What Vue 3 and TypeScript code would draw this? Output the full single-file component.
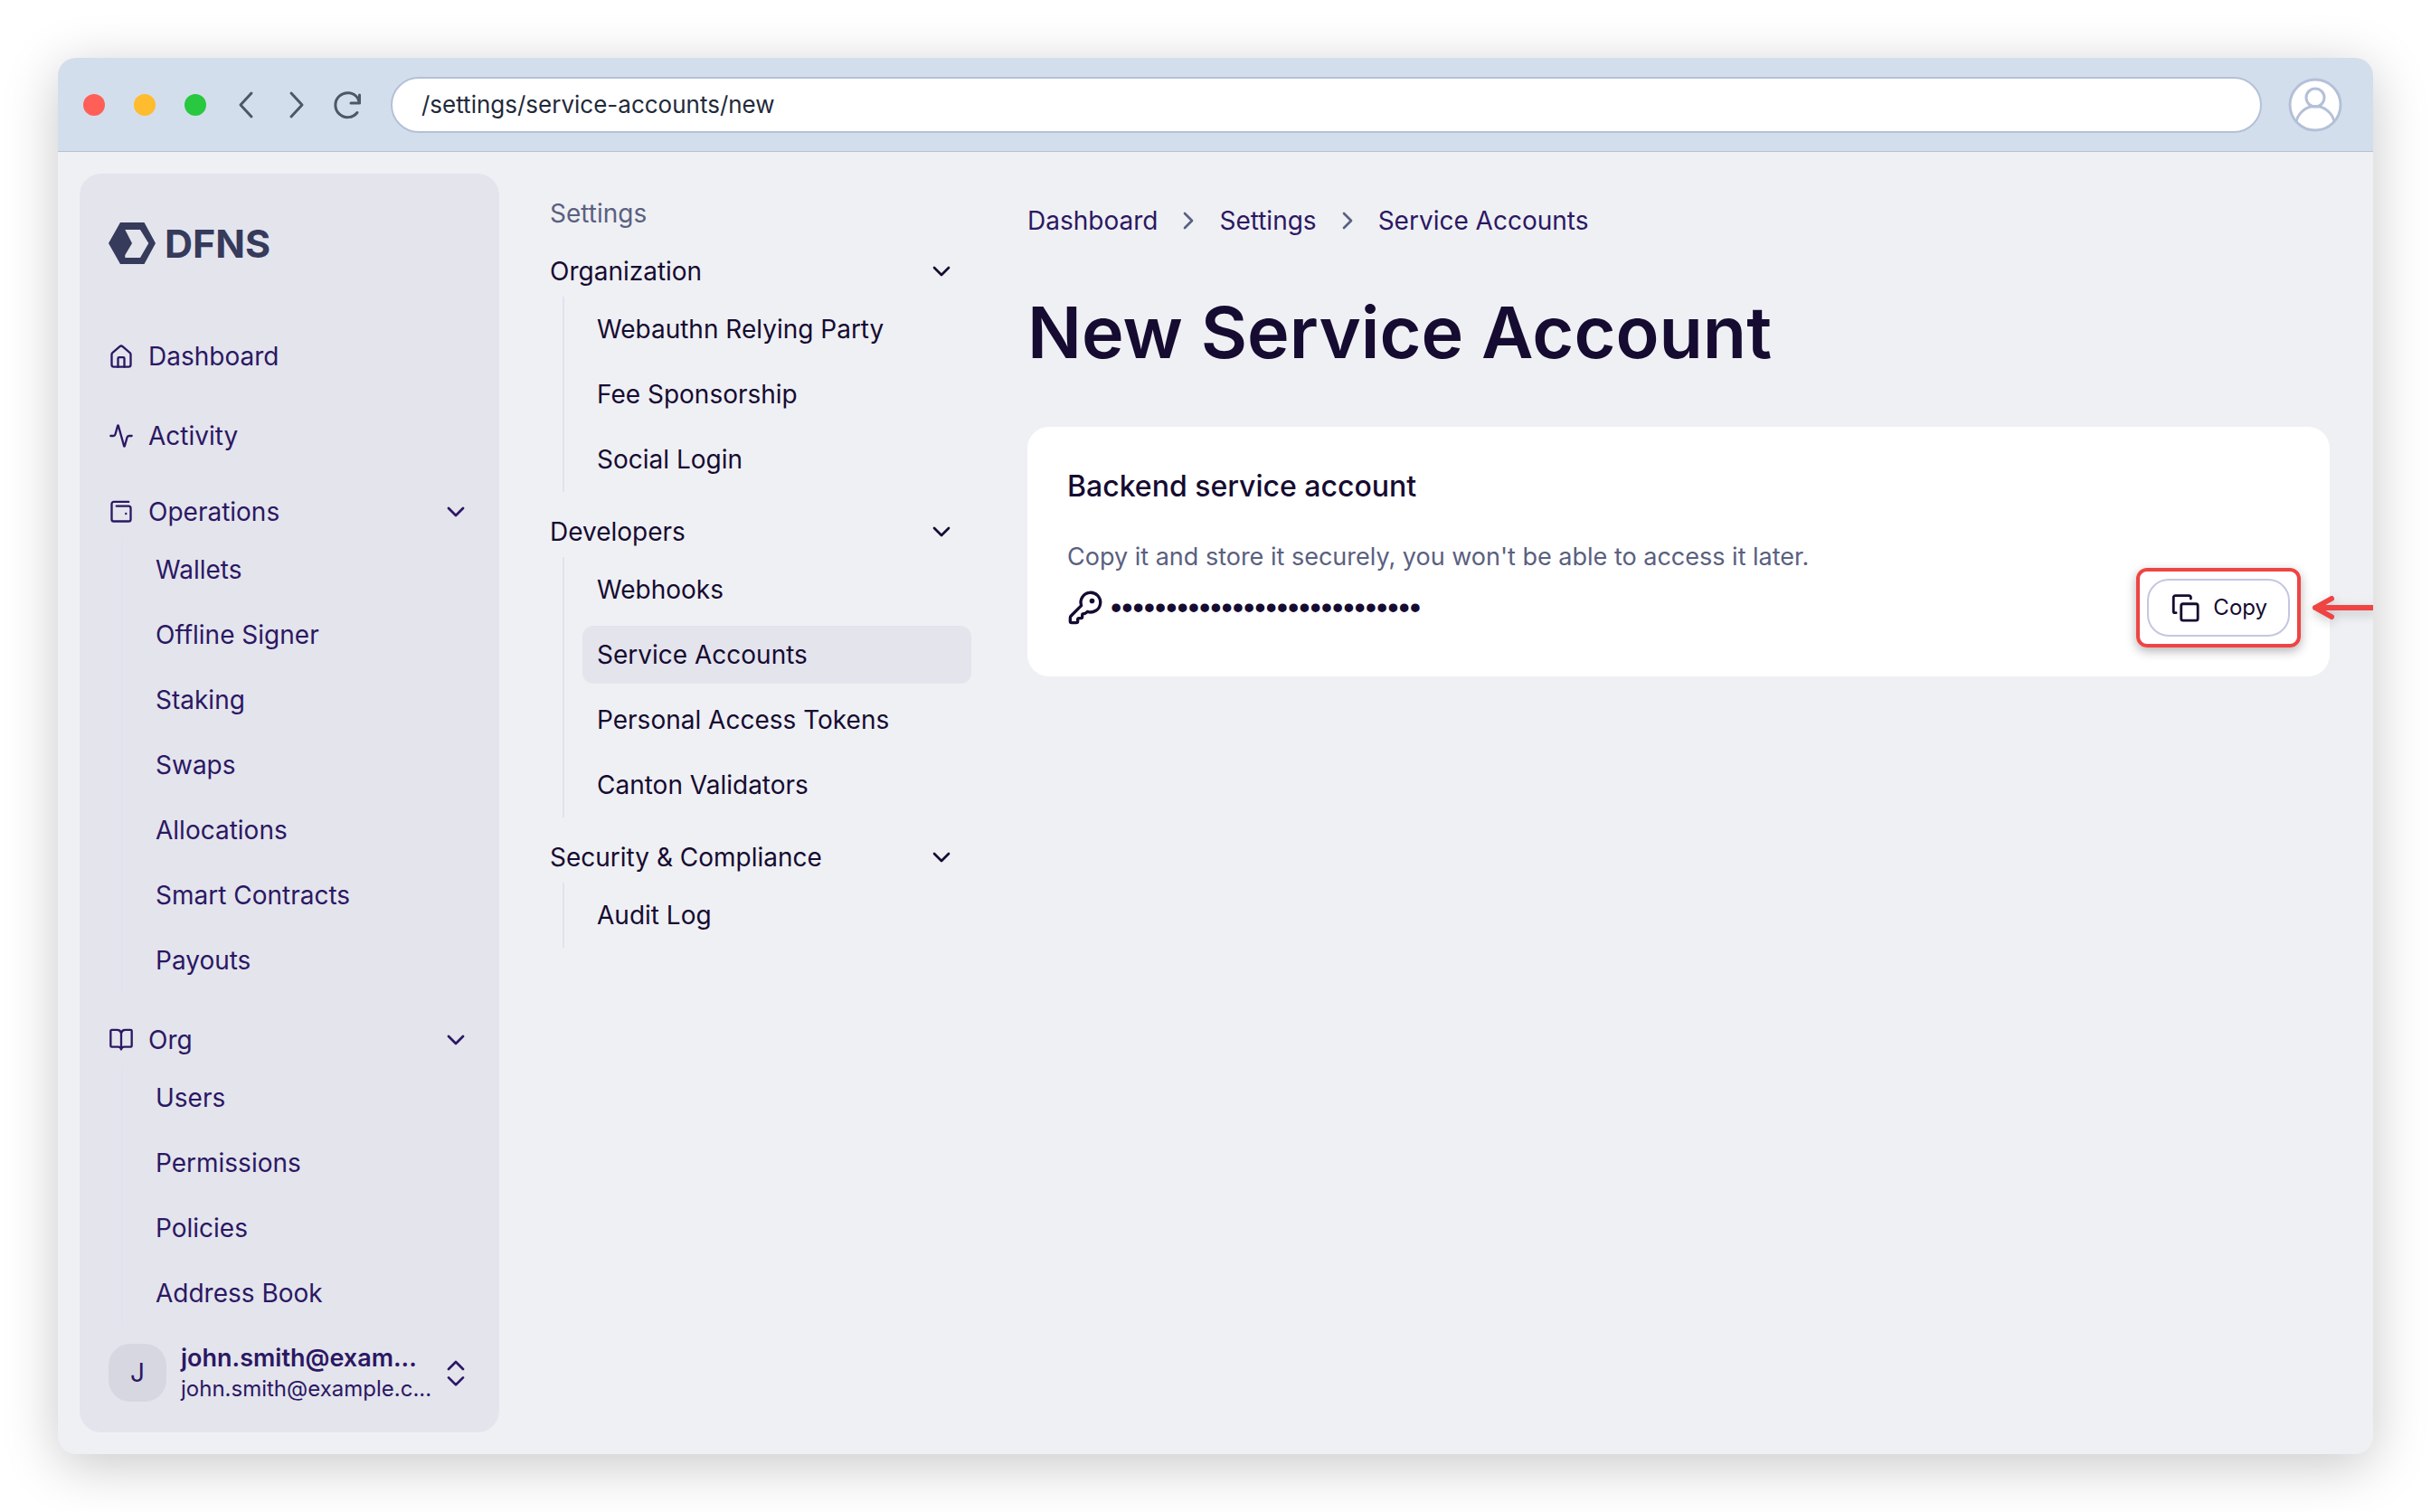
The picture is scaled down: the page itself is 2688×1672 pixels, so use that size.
<script setup lang="ts">
import { ref } from 'vue'

interface NavGroup {
  label: string
  icon?: string
  items: string[]
}

const url = ref('/settings/service-accounts/new')
const secret = '•'.repeat(28)
const activeItem = 'Service Accounts'

const primaryLinks = [
  { label: 'Dashboard', icon: 'home' },
  { label: 'Activity', icon: 'activity' },
]

const primaryGroups: NavGroup[] = [
  {
    label: 'Operations',
    icon: 'wallet',
    items: ['Wallets', 'Offline Signer', 'Staking', 'Swaps', 'Allocations', 'Smart Contracts', 'Payouts'],
  },
  { label: 'Org', icon: 'book', items: ['Users', 'Permissions', 'Policies', 'Address Book'] },
]

const settingsGroups: NavGroup[] = [
  { label: 'Organization', items: ['Webauthn Relying Party', 'Fee Sponsorship', 'Social Login'] },
  { label: 'Developers', items: ['Webhooks', 'Service Accounts', 'Personal Access Tokens', 'Canton Validators'] },
  { label: 'Security & Compliance', items: ['Audit Log'] },
]

const crumbs = ['Dashboard', 'Settings', 'Service Accounts']

const icons: Record<string, string[]> = {
  home: [
    'M3 10.2a2 2 0 0 1 .7-1.5l7-6a2 2 0 0 1 2.6 0l7 6a2 2 0 0 1 .7 1.500v9.800a2 2 0 0 1-2 2H5a2 2 0 0 1-2-2z',
    'M9 22v-8a1 1 0 0 1 1-1h4a1 1 0 0 1 1 1v8',
  ],
  activity: [
    'M22 12h-2.480a2 2 0 0 0-1.930 1.460l-2.350 8.360a.25.25 0 0 1-.48 0L9.240 2.180a.25.25 0 0 0-.48 0l-2.350 8.360A2 2 0 0 1 4.490 12H2',
  ],
  wallet: [
    'M19 2.500H5a2 2 0 0 0-2 2V19a2 2 0 0 0 2 2h14a2 2 0 0 0 2-2V8.500a2 2 0 0 0-2-2H7.500',
    'M16.500 13.700h.01',
  ],
  book: [
    'M12 6v15',
    'M3 18.500a1 1 0 0 1-1-1v-14a1 1 0 0 1 1-1h5a4 4 0 0 1 4 3 4 4 0 0 1 4-3h5a1 1 0 0 1 1 1v14a1 1 0 0 1-1 1h-6a3 3 0 0 0-3 2 3 3 0 0 0-3-2z',
  ],
}
</script>

<template>
  <div class="browser">
    <header class="chrome">
      <div class="lights" aria-hidden="true">
        <span class="light red"></span>
        <span class="light amber"></span>
        <span class="light green"></span>
      </div>
      <button class="chrome-btn" type="button" aria-label="Back">
        <svg width="20" height="32" viewBox="0 0 20 32"><path d="M16 3 4 16l12 13" /></svg>
      </button>
      <button class="chrome-btn" type="button" aria-label="Forward">
        <svg width="20" height="32" viewBox="0 0 20 32"><path d="m4 3 12 13L4 29" /></svg>
      </button>
      <button class="chrome-btn reload" type="button" aria-label="Reload">
        <svg width="36" height="36" viewBox="0 0 36 36">
          <path d="M29 26.500A13.500 13.500 0 1 1 29.500 10.500L31.500 15.500" />
          <path d="M31.500 7v9H22" />
        </svg>
      </button>
      <input v-model="url" class="address" type="text" aria-label="Address" />
      <svg class="profile" width="60" height="60" viewBox="0 0 60 60" aria-hidden="true">
        <circle cx="30" cy="30" r="28" fill="#fff" />
        <circle cx="30" cy="22" r="10" />
        <path d="M9 48.500a21.500 21.500 0 0 1 42 0" />
      </svg>
    </header>

    <div class="body">
      <aside class="sidebar">
        <a class="logo" href="#">
          <svg width="52" height="46" viewBox="0 0 52 46" aria-hidden="true">
            <path
              fill="currentColor"
              fill-rule="evenodd"
              d="M13 0h26.500L52 23 39.500 46H13L0 23zM18.300 8 26 23l-7.700 13v3H35l9.300-16L35 8z"
            />
          </svg>
          <span>DFNS</span>
        </a>

        <nav class="primary" aria-label="Main">
          <a v-for="link in primaryLinks" :key="link.label" class="top-link" href="#">
            <svg class="line-icon" viewBox="0 0 24 24" aria-hidden="true">
              <path v-for="d in icons[link.icon]" :key="d" :d="d" />
            </svg>
            {{ link.label }}
          </a>
          <section v-for="group in primaryGroups" :key="group.label" class="group">
            <button class="group-head" type="button" aria-expanded="true">
              <svg class="line-icon" viewBox="0 0 24 24" aria-hidden="true">
                <path v-for="d in icons[group.icon ?? '']" :key="d" :d="d" />
              </svg>
              <span class="grow">{{ group.label }}</span>
              <svg class="chevron" viewBox="0 0 24 24" aria-hidden="true"><path d="m6 9 6 6 6-6" /></svg>
            </button>
            <ul class="sub">
              <li v-for="item in group.items" :key="item"><a href="#">{{ item }}</a></li>
            </ul>
          </section>
        </nav>

        <button class="account" type="button">
          <span class="initial">J</span>
          <span class="who">
            <strong>john.smith@exam...</strong>
            <small>john.smith@example.c...</small>
          </span>
          <svg class="chevron" viewBox="0 0 24 24" aria-hidden="true">
            <path d="m6 9 6-6 6 6M6 16l6 6 6-6" />
          </svg>
        </button>
      </aside>

      <nav class="settings" aria-label="Settings">
        <p class="settings-title">Settings</p>
        <section v-for="group in settingsGroups" :key="group.label" class="group">
          <button class="group-head" type="button" aria-expanded="true">
            <span class="grow">{{ group.label }}</span>
            <svg class="chevron" viewBox="0 0 24 24" aria-hidden="true"><path d="m6 9 6 6 6-6" /></svg>
          </button>
          <ul class="sub">
            <li v-for="item in group.items" :key="item">
              <a href="#" :class="{ active: item === activeItem }">{{ item }}</a>
            </li>
          </ul>
        </section>
      </nav>

      <main class="content">
        <nav class="crumbs" aria-label="Breadcrumb">
          <template v-for="(crumb, i) in crumbs" :key="crumb">
            <svg v-if="i > 0" class="crumb-sep" viewBox="0 0 24 24" aria-hidden="true">
              <path d="m9 6 6 6-6 6" />
            </svg>
            <a href="#">{{ crumb }}</a>
          </template>
        </nav>
        <h1>New Service Account</h1>
        <section class="card">
          <h2>Backend service account</h2>
          <p class="hint">Copy it and store it securely, you won't be able to access it later.</p>
          <div class="secret-row">
            <svg class="key" width="40" height="40" viewBox="0 0 24 24" aria-hidden="true">
              <path
                d="M2.590 17.410A2 2 0 0 0 2 18.830V21a1 1 0 0 0 1 1h3a1 1 0 0 0 1-1v-1a1 1 0 0 1 1-1h1a1 1 0 0 0 1-1v-1a1 1 0 0 1 1-1h.17a2 2 0 0 0 1.410-.59l.81-.81a6.500 6.500 0 1 0-4-4z"
              />
              <circle cx="16.500" cy="7.500" r=".7" fill="currentColor" />
            </svg>
            <span class="dots">{{ secret }}</span>
            <div class="copy-wrap">
              <button class="copy" type="button">
                <svg width="34" height="34" viewBox="0 0 24 24" aria-hidden="true">
                  <rect x="9" y="9" width="13" height="13" rx="1.500" />
                  <path d="M5 16H4a1 1 0 0 1-1-1V4a1.500 1.500 0 0 1 1.500-1.500H15A1.500 1.500 0 0 1 16.500 4v1" />
                </svg>
                Copy
              </button>
              <svg class="arrow" width="72" height="36" viewBox="0 0 72 36" aria-hidden="true">
                <path d="M5 18h70M23 8 5 18l18 10" />
              </svg>
            </div>
          </div>
        </section>
      </main>
    </div>
  </div>
</template>

<style>
body {
  background: #fff;
}
</style>

<style scoped>
* {
  box-sizing: border-box;
}

.browser {
  display: flex;
  flex-direction: column;
  min-height: calc(100vh - 128px);
  margin: 64px;
  overflow: hidden;
  border-radius: 20px;
  background: #eff0f4;
  box-shadow: 0 12px 60px rgba(0, 0, 0, 0.22);
  color: #160b31;
  font: 400 28px/36px Inter, "Liberation Sans", sans-serif;
}

a {
  color: inherit;
  text-decoration: none;
}

button {
  padding: 0;
  border: 0;
  background: none;
  color: inherit;
  font: inherit;
  text-align: left;
  cursor: pointer;
}

h1,
h2,
p,
ul {
  margin: 0;
  padding: 0;
  list-style: none;
}

svg {
  flex: none;
  fill: none;
  stroke-linecap: round;
  stroke-linejoin: round;
}

/* Browser chrome */
.chrome {
  display: flex;
  align-items: center;
  height: 104px;
  padding: 0 34px 0 28px;
  border-bottom: 1px solid #b4c2d8;
  background: #d3deec;
}

.lights {
  display: flex;
  gap: 32px;
  margin-right: 34px;
}

.light {
  width: 24px;
  height: 24px;
  border-radius: 50%;
}

.red {
  background: #ff5f57;
}

.amber {
  background: #febc2e;
}

.green {
  background: #28c840;
}

.chrome-btn {
  display: flex;
  margin-right: 36px;
  stroke: #4b5866;
  stroke-width: 3;
}

.reload {
  margin-right: 30px;
  margin-left: -8px;
}

.address {
  flex: 1;
  min-width: 0;
  height: 62px;
  padding: 0 32px;
  border: 2px solid #b4c0d8;
  border-radius: 31px;
  background: #fff;
  color: #1f2a3a;
  font: 400 26px/36px Inter, "Liberation Sans", sans-serif;
}

.profile {
  margin-left: 29px;
  stroke: #b4c0d8;
  stroke-width: 3;
}

/* Page body */
.body {
  display: flex;
  flex: 1;
  padding: 24px;
}

.sidebar {
  display: flex;
  flex: none;
  flex-direction: column;
  width: 464px;
  padding: 54px 32px 32px;
  border-radius: 24px;
  background: #e4e4ed;
  color: #2b1863;
}

.logo {
  display: flex;
  align-items: center;
  gap: 10px;
  height: 46px;
  margin-bottom: 70px;
  color: #363a5b;
  font-size: 43px;
  font-weight: 700;
}

.primary {
  display: flex;
  flex-direction: column;
  gap: 24px;
}

.top-link {
  display: flex;
  align-items: center;
  gap: 16px;
  height: 64px;
}

.line-icon {
  width: 28px;
  height: 28px;
  stroke: currentColor;
  stroke-width: 2;
}

.group-head {
  display: flex;
  align-items: center;
  gap: 16px;
  width: 100%;
  height: 56px;
}

.grow {
  flex: 1;
}

.chevron {
  width: 32px;
  height: 32px;
  stroke: currentColor;
  stroke-width: 2;
}

.sub {
  margin-left: 14px;
  border-left: 2px solid #dfe3f0;
}

.sub li {
  padding: 4px 0 4px 20px;
}

.sub a {
  display: block;
  padding: 14px 16px;
  border-radius: 12px;
}

.sub .active {
  background: #e4e4ed;
}

.account {
  display: flex;
  align-items: center;
  gap: 16px;
  margin-top: auto;
}

.initial {
  display: grid;
  flex: none;
  place-items: center;
  width: 64px;
  height: 64px;
  border-radius: 24px;
  background: #d7d7e1;
}

.who {
  display: flex;
  flex: 1;
  flex-direction: column;
  min-width: 0;
  white-space: nowrap;
}

.who strong {
  font-size: 27px;
  font-weight: 600;
}

.who small {
  font-size: 24px;
  line-height: 32px;
}

/* Settings navigation */
.settings {
  display: flex;
  flex: none;
  flex-direction: column;
  gap: 16px;
  width: 466px;
  margin-left: 56px;
  padding-top: 26px;
}

.settings-title {
  margin-bottom: 2px;
  color: #5a6080;
}

.settings .group-head {
  padding-right: 17px;
}

/* Content */
.content {
  flex: 1;
  min-width: 0;
  margin-left: 62px;
  padding: 34px 24px 0 0;
}

.crumbs {
  display: flex;
  align-items: center;
  gap: 18px;
  color: #2b1863;
}

.crumb-sep {
  width: 32px;
  height: 32px;
  stroke: #5a6080;
  stroke-width: 2;
}

h1 {
  margin: 56px 0;
  font-size: 79px;
  font-weight: 600;
  line-height: 98px;
}

.card {
  padding: 44px;
  border-radius: 24px;
  background: #fff;
}

h2 {
  font-size: 32px;
  font-weight: 500;
  line-height: 44px;
}

.hint {
  margin-top: 38px;
  color: #5a6080;
  font-size: 27px;
}

.secret-row {
  display: flex;
  align-items: center;
  gap: 8px;
  height: 64px;
  margin-top: 6px;
}

.key {
  stroke: currentColor;
  stroke-width: 2;
}

.dots {
  flex: 1;
  font-family: "Liberation Sans", Arial, sans-serif;
  font-size: 35px;
}

.copy-wrap {
  position: relative;
}

.copy-wrap::before {
  position: absolute;
  inset: -12px;
  border: 4px solid #ef4444;
  border-radius: 12px;
  box-shadow: 0 4px 12px rgba(0, 0, 0, 0.3);
  content: "";
}

.copy {
  position: relative;
  display: flex;
  align-items: center;
  gap: 14px;
  height: 64px;
  padding: 0 23px;
  border: 2px solid #c3c8e0;
  border-radius: 24px;
  background: #fff;
  font-size: 24px;
}

.copy svg {
  stroke: currentColor;
  stroke-width: 2;
}

.arrow {
  position: absolute;
  top: 14px;
  left: calc(100% + 23px);
  stroke: #ef4444;
  stroke-width: 6;
  filter: drop-shadow(0 4px 6px rgba(0, 0, 0, 0.2));
}
</style>
